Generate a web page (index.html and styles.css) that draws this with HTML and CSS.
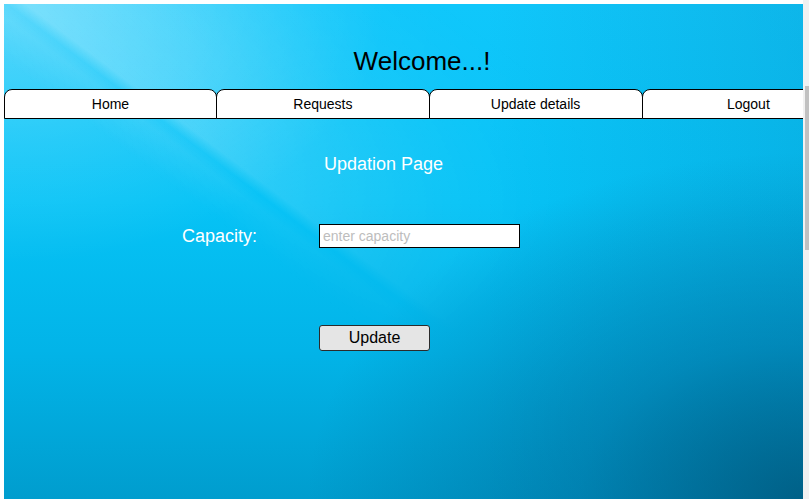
FILE: index.html
```html
<!DOCTYPE html>
<html>
<head>
<meta charset="utf-8">
<title>Updation Page</title>
<link rel="stylesheet" href="styles.css">
</head>
<body>
<div class="page">
  <h1 class="welcome">Welcome...!</h1>
  <nav class="tabs">
    <a class="tab" href="#">Home</a>
    <a class="tab" href="#">Requests</a>
    <a class="tab" href="#">Update details</a>
    <a class="tab" href="#">Logout</a>
  </nav>
  <h2 class="title">Updation Page</h2>
  <form class="form">
    <label class="label" for="cap">Capacity:</label>
    <input class="field" id="cap" type="text" placeholder="enter capacity">
    <span></span>
    <button class="btn" type="button">Update</button>
  </form>
</div>
<div class="scrollbar"><div class="thumb"></div></div>
</body>
</html>
```
FILE: styles.css
```css
html, body {
  margin: 0;
  padding: 0;
  background: #ffffff;
  overflow: hidden;
}
body {
  padding: 4px 0 0 4px;
  font-family: "Liberation Sans", Arial, sans-serif;
}
.page {
  position: relative;
  isolation: isolate;
  width: 799px;
  height: 495px;
  overflow: hidden;
  background:
    radial-gradient(ellipse 380px 260px at 0 0, rgba(255,255,255,0.30) 0%, rgba(255,255,255,0.12) 55%, rgba(255,255,255,0) 100%),
    radial-gradient(ellipse 62% 70% at 100% 100%, rgba(0,88,125,0.85) 0%, rgba(0,100,145,0.45) 45%, rgba(0,110,160,0) 100%),
    linear-gradient(to right, rgba(0,0,0,0) 60%, rgba(0,60,110,0.12) 100%),
    linear-gradient(to bottom, #10c7fb 0%, #06c3f6 40%, #02b4e8 70%, #009dce 100%);
}
.page::before {
  content: "";
  position: absolute;
  inset: 0;
  z-index: -1;
  background: linear-gradient(37deg, rgba(255,255,255,0) 40%, rgba(255,255,255,0.08) 44%, rgba(255,255,255,0.02) 45.3%, rgba(255,255,255,0.22) 46.6%, rgba(255,255,255,0.16) 55%, rgba(255,255,255,0.06) 66%, rgba(255,255,255,0) 76%);
  -webkit-mask-image: radial-gradient(ellipse 85% 100% at 0 0, #000 30%, rgba(0,0,0,0) 95%);
  mask-image: radial-gradient(ellipse 85% 100% at 0 0, #000 30%, rgba(0,0,0,0) 95%);
}
.welcome {
  margin: 0;
  padding: 42px 0 0 37px;
  font-size: 26px;
  font-weight: normal;
  line-height: 30px;
  text-align: center;
  color: #000;
}
.tabs {
  display: flex;
  margin-top: 13px;
  width: 860px;
}
.tab {
  flex: 0 0 213px;
  box-sizing: border-box;
  height: 30px;
  line-height: 28px;
  border: 1px solid #000;
  border-radius: 8px 8px 0 0;
  background: #fff;
  color: #000;
  font-size: 14px;
  text-align: center;
  text-decoration: none;
}
.tab + .tab {
  margin-left: -1px;
  flex-basis: 213.75px;
}
.title {
  margin: 35px 0 0;
  padding-right: 40px;
  font-size: 18px;
  font-weight: normal;
  line-height: 20px;
  text-align: center;
  color: #fff;
}
.form {
  display: grid;
  grid-template-columns: 137px 201px;
  grid-template-rows: 24px 26px;
  row-gap: 77px;
  align-items: center;
  margin-top: 50px;
  padding-left: 178px;
}
.label {
  font-size: 18px;
  line-height: 20px;
  color: #fff;
}
.field {
  box-sizing: border-box;
  width: 201px;
  height: 24px;
  margin: 0;
  padding: 0 3px;
  border: 1px solid #000;
  background: #fff;
  font-family: "Liberation Sans", Arial, sans-serif;
  font-size: 14px;
  outline: none;
}
.field::placeholder {
  color: #bdbdbd;
}
.btn {
  box-sizing: border-box;
  width: 111px;
  height: 26px;
  margin: 0;
  padding: 0;
  border: 1px solid #2b2b2b;
  border-radius: 3px;
  background: #e5e5e5;
  color: #000;
  font-family: "Liberation Sans", Arial, sans-serif;
  font-size: 16px;
}
.scrollbar {
  position: fixed;
  top: 0;
  right: 0;
  width: 6px;
  height: 499px;
  background: #f1f1f1;
}
.thumb {
  position: absolute;
  top: 86px;
  right: 0;
  width: 4px;
  height: 164px;
  background: #c1c1c1;
}
```
